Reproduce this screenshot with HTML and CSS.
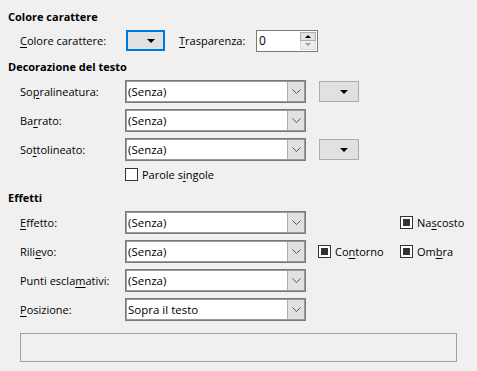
FILE: index.html
```html
<!DOCTYPE html>
<html lang="it">
<head>
    <meta charset="UTF-8">
    <title>Effetti carattere</title>
    <link rel="stylesheet" href="styles.css">
</head>
<body>
    <main class="page">
        <!-- Colore carattere -->
        <section class="group">
            <h2 class="group-title">Colore carattere</h2>
            <div class="row-color">
                <span class="label label-color"><u>C</u>olore carattere:</span>
                <button class="color-btn"><span class="tri-down"></span></button>
                <span class="label label-trasp"><u>T</u>rasparenza:</span>
                <div class="spin">
                    <span class="spin-value">0</span>
                    <span class="spin-btns">
                        <span class="spin-up"><span class="tri-up"></span></span>
                        <span class="spin-down"><span class="tri-down tri-grey"></span></span>
                    </span>
                </div>
            </div>
        </section>

        <!-- Decorazione del testo -->
        <section class="group">
            <h2 class="group-title">Decorazione del testo</h2>
            <div class="row">
                <span class="label">So<u>p</u>ralineatura:</span>
                <div class="combo">
                    <span class="combo-text">(Senza)</span>
                    <span class="combo-btn"><svg width="9" height="5" viewBox="0 0 9 5"><polyline points="0.5,0.5 4.5,4.5 8.5,0.5" fill="none" stroke="#555" stroke-width="1"/></svg></span>
                </div>
                <button class="small-btn"><span class="tri-down"></span></button>
            </div>
            <div class="row">
                <span class="label">Ba<u>r</u>rato:</span>
                <div class="combo">
                    <span class="combo-text">(Senza)</span>
                    <span class="combo-btn"><svg width="9" height="5" viewBox="0 0 9 5"><polyline points="0.5,0.5 4.5,4.5 8.5,0.5" fill="none" stroke="#555" stroke-width="1"/></svg></span>
                </div>
            </div>
            <div class="row">
                <span class="label">So<u>t</u>tolineato:</span>
                <div class="combo">
                    <span class="combo-text">(Senza)</span>
                    <span class="combo-btn"><svg width="9" height="5" viewBox="0 0 9 5"><polyline points="0.5,0.5 4.5,4.5 8.5,0.5" fill="none" stroke="#555" stroke-width="1"/></svg></span>
                </div>
                <button class="small-btn"><span class="tri-down"></span></button>
            </div>
            <div class="row row-check">
                <span></span>
                <span class="check"><span class="box"></span>Parole s<u>i</u>ngole</span>
            </div>
        </section>

        <!-- Effetti -->
        <section class="group">
            <h2 class="group-title">Effetti</h2>
            <div class="row">
                <span class="label"><u>E</u>ffetto:</span>
                <div class="combo">
                    <span class="combo-text">(Senza)</span>
                    <span class="combo-btn"><svg width="9" height="5" viewBox="0 0 9 5"><polyline points="0.5,0.5 4.5,4.5 8.5,0.5" fill="none" stroke="#555" stroke-width="1"/></svg></span>
                </div>
                <span></span>
                <span class="check"><span class="box checked"></span>Na<u>s</u>costo</span>
            </div>
            <div class="row">
                <span class="label">Rili<u>e</u>vo:</span>
                <div class="combo">
                    <span class="combo-text">(Senza)</span>
                    <span class="combo-btn"><svg width="9" height="5" viewBox="0 0 9 5"><polyline points="0.5,0.5 4.5,4.5 8.5,0.5" fill="none" stroke="#555" stroke-width="1"/></svg></span>
                </div>
                <span class="check"><span class="box checked"></span>Co<u>n</u>torno</span>
                <span class="check"><span class="box checked"></span>Om<u>b</u>ra</span>
            </div>
            <div class="row">
                <span class="label">Punti escla<u>m</u>ativi:</span>
                <div class="combo">
                    <span class="combo-text">(Senza)</span>
                    <span class="combo-btn"><svg width="9" height="5" viewBox="0 0 9 5"><polyline points="0.5,0.5 4.5,4.5 8.5,0.5" fill="none" stroke="#555" stroke-width="1"/></svg></span>
                </div>
            </div>
            <div class="row">
                <span class="label"><u>P</u>osizione:</span>
                <div class="combo">
                    <span class="combo-text">Sopra il testo</span>
                    <span class="combo-btn"><svg width="9" height="5" viewBox="0 0 9 5"><polyline points="0.5,0.5 4.5,4.5 8.5,0.5" fill="none" stroke="#555" stroke-width="1"/></svg></span>
                </div>
            </div>
        </section>

        <div class="preview"></div>
    </main>
</body>
</html>
```

FILE: styles.css
```css
* {
    margin: 0;
    padding: 0;
    box-sizing: border-box;
}

body {
    background-color: #f0f0f0;
    font-family: 'Open Sans', sans-serif;
    font-size: 11px;
    color: #000;
    width: 477px;
    height: 371px;
    overflow: hidden;
}

.page {
    padding-top: 4px;
}

u {
    text-decoration: underline;
    text-underline-offset: 2px;
}

.group-title {
    font-size: 11px;
    font-weight: 700;
    height: 16px;
    line-height: 16px;
    margin: 5px 0 2px 8px;
}

/* Colore carattere row */
.row-color {
    display: flex;
    align-items: center;
    height: 27px;
    padding-left: 20px;
}

.label-color {
    width: 106px;
}

.color-btn {
    width: 39px;
    height: 21px;
    background-color: #e1e1e1;
    border: 2px solid #0078d7;
    display: flex;
    align-items: center;
    justify-content: center;
}

.color-btn .tri-down {
    margin-left: 11px;
}

.label-trasp {
    width: 77px;
    margin-left: 14px;
}

.spin {
    width: 62px;
    height: 22px;
    border: 1px solid #7a7a7a;
    background-color: #fff;
    display: flex;
    align-items: center;
    padding: 1px 1px 1px 2px;
}

.spin-value {
    flex: 1;
    font-size: 12px;
}

.spin-btns {
    width: 16px;
    height: 100%;
    display: flex;
    flex-direction: column;
}

.spin-up,
.spin-down {
    flex: 1;
    display: flex;
    align-items: center;
    justify-content: center;
}

.spin-up {
    background-color: #e1e1e1;
    border: 1px solid #adadad;
}

.spin-down {
    background-color: #ececec;
    border: 1px solid #dadada;
    border-top: none;
}

.tri-down {
    width: 0;
    height: 0;
    border-left: 4px solid transparent;
    border-right: 4px solid transparent;
    border-top: 4px solid #000;
}

.tri-up {
    width: 0;
    height: 0;
    border-left: 3px solid transparent;
    border-right: 3px solid transparent;
    border-bottom: 3px solid #000;
}

.tri-grey {
    border-left-width: 3px;
    border-right-width: 3px;
    border-top-width: 3px;
    border-top-color: #999;
}

/* Rows with combo boxes */
.row {
    display: grid;
    grid-template-columns: 105px 193px 82px auto;
    align-items: center;
    height: 29px;
    padding-left: 20px;
}

.row-check {
    height: 21px;
}

.combo {
    width: 181px;
    height: 23px;
    border: 1px solid #7a7a7a;
    box-shadow: inset 0 0 0 1px #9a9a9a;
    background-color: #fff;
    display: flex;
    align-items: stretch;
}

.combo-text {
    flex: 1;
    padding-left: 2px;
    line-height: 21px;
    font-size: 11.5px;
}

.combo-btn {
    width: 17px;
    background-color: #e1e1e1;
    border-left: 1px solid #adadad;
    margin: 1px 1px 1px 0;
    display: flex;
    align-items: center;
    justify-content: center;
}

.small-btn {
    width: 40px;
    height: 21px;
    margin-left: 1px;
    background-color: #e1e1e1;
    border: 1px solid #adadad;
    display: flex;
    align-items: center;
    justify-content: center;
}

.small-btn .tri-down {
    margin-left: 10px;
}

/* Checkboxes */
.check {
    display: flex;
    align-items: center;
    white-space: nowrap;
}

.box {
    width: 13px;
    height: 13px;
    border: 1px solid #333;
    background-color: #fff;
    margin-right: 4px;
    padding: 2px;
}

.box.checked::after {
    content: "";
    display: block;
    width: 7px;
    height: 7px;
    background-color: #333;
}

.preview {
    margin: 9px 0 0 20px;
    width: 437px;
    height: 29px;
    border: 1px solid #a0a0a0;
}
```
